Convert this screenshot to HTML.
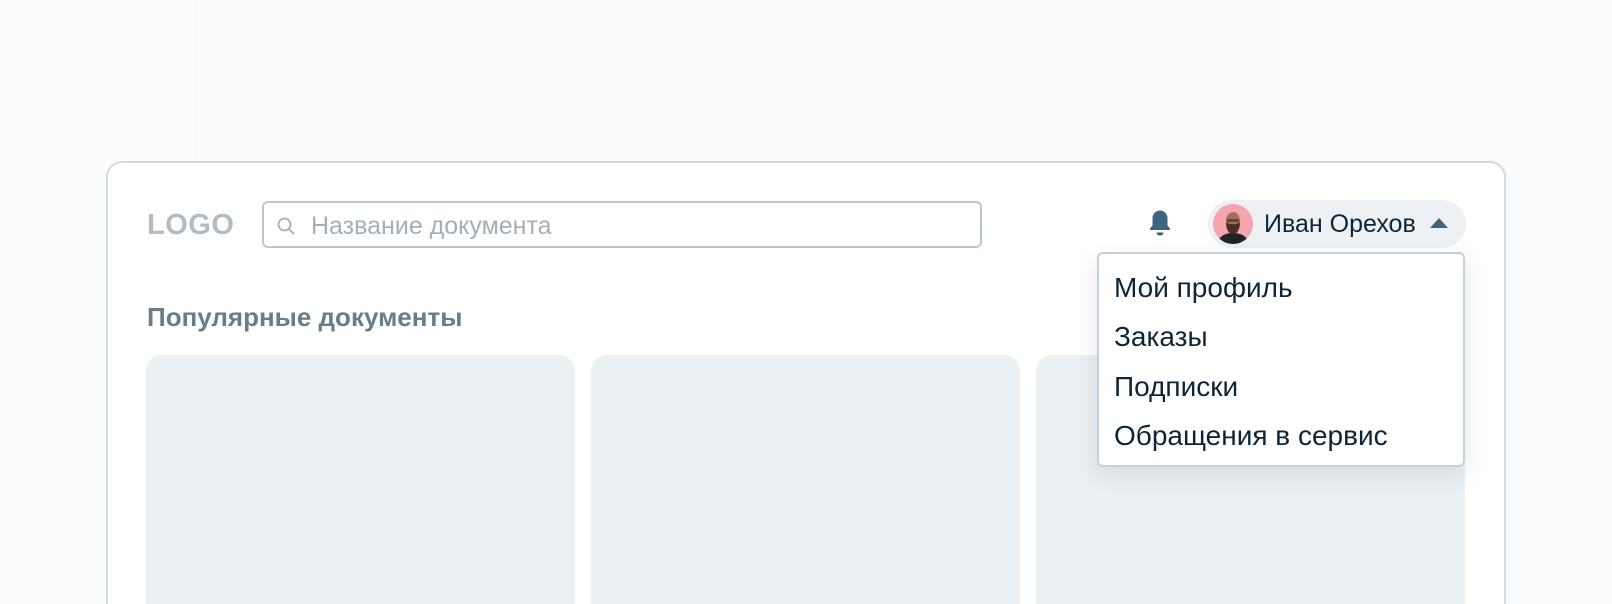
<!DOCTYPE html>
<html><head><meta charset="utf-8"><style>
html,body{margin:0;padding:0;width:1612px;height:604px;overflow:hidden}
body{background:#fbfcfd;position:relative;font-family:"Liberation Sans",sans-serif}
.bg{position:absolute;left:195px;top:0;width:1085px;height:160px;background:#f9fafb}
.box{position:absolute;left:106px;top:161px;width:1396px;height:441px;background:#fff;border:2px solid #cfdbe3;border-bottom:none;border-radius:16px 16px 0 0}
.logo{position:absolute;left:147px;top:208px;font-size:29px;font-weight:bold;color:#b1bcc4;line-height:34px;letter-spacing:0.5px}
.search{position:absolute;left:262px;top:201px;width:720px;border:2px solid #b9c7d2;border-radius:6px;box-sizing:border-box;height:47px}
.search span{position:absolute;left:47px;top:9px;font-size:25px;color:#a3afb8;line-height:28px}
.search svg{position:absolute;left:13px;top:14px}
h2{position:absolute;left:147px;top:302px;margin:0;font-size:26px;color:#687d8c;font-weight:bold;line-height:30px}
.card{position:absolute;top:355px;width:429px;height:249px;background:#ebf0f3;border-radius:16px 16px 0 0}
.pill{position:absolute;left:1208px;top:200px;width:258px;height:48px;border-radius:24px;background:#edf1f4}
.av{position:absolute;left:5px;top:4px;width:40px;height:40px;border-radius:50%;background:#f4a5b0;overflow:hidden}
.name{position:absolute;left:56px;top:9px;font-size:25px;color:#0e2538;line-height:30px}
.dd{position:absolute;left:1097px;top:252px;width:368px;height:215px;box-sizing:border-box;background:#fff;border:2px solid #c3d1dc;border-radius:6px;box-shadow:0 8px 24px rgba(40,60,80,.12)}
.dd div{position:absolute;left:15px;font-size:28px;color:#0e2538;line-height:32px}
</style></head><body>
<div class="bg"></div>
<div class="box"></div>
<div class="logo">LOGO</div>
<div class="search"><svg width="18" height="18" viewBox="0 0 18 18"><circle cx="7.5" cy="7.5" r="6" fill="none" stroke="#a3afb8" stroke-width="1.8"/><line x1="12" y1="12" x2="16.5" y2="16.5" stroke="#a3afb8" stroke-width="1.8" stroke-linecap="round"/></svg><span>Название документа</span></div>
<h2>Популярные документы</h2>
<div class="card" style="left:146px"></div>
<div class="card" style="left:591px"></div>
<div class="card" style="left:1036px"></div>
<svg style="position:absolute;left:1149px;top:209px" width="22" height="28" viewBox="0 0 22 28"><path d="M11 1.5c-4.5 0-7.5 3.5-7.5 8v7l-2.5 3v1.5h20v-1.5l-2.5-3v-7c0-4.5-3-8-7.5-8z" fill="#3c6680"/><path d="M7.5 23.5h7c0 2-1.5 3-3.5 3s-3.5-1-3.5-3z" fill="#3c6680"/></svg>
<div class="pill"><div class="av"><svg width="40" height="40" viewBox="0 0 40 40"><path d="M4 40c2-8 8-11 16-11s14 3 16 11z" fill="#1f2428"/><ellipse cx="20" cy="17" rx="7" ry="9" fill="#a0705a"/><path d="M13 18c0 8 3 12 7 12s7-4 7-12c-2 3-12 3-14 0z" fill="#4a2e22"/><rect x="14" y="15" width="12" height="3" fill="#3a2a22" opacity=".6"/></svg></div><div class="name">Иван Орехов</div><svg style="position:absolute;left:222px;top:18px" width="18" height="10" viewBox="0 0 18 10"><path d="M0 10L9 0L18 10z" fill="#3c6680"/></svg></div>
<div class="dd">
<div style="top:18px">Мой профиль</div>
<div style="top:67px">Заказы</div>
<div style="top:117px">Подписки</div>
<div style="top:166px">Обращения в сервис</div>
</div>
</body></html>
